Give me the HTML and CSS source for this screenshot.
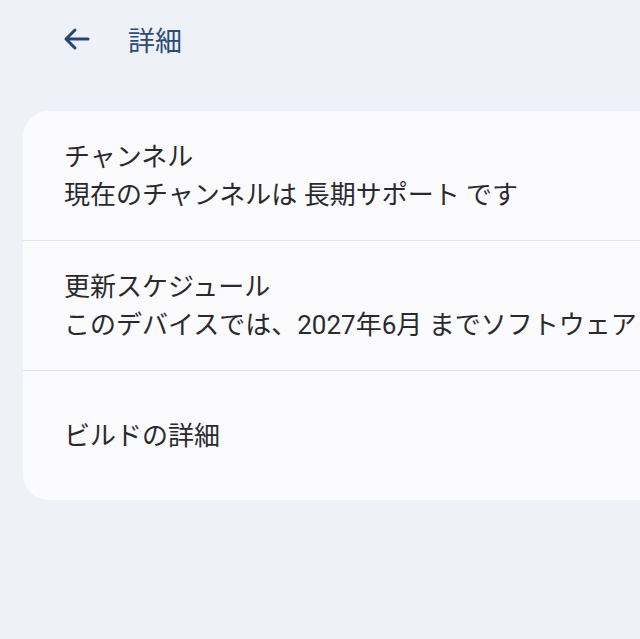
FILE: index.html
```html
<!DOCTYPE html>
<html lang="ja">
<head>
<meta charset="utf-8">
<link rel="stylesheet" href="styles.css">
</head>
<body>
<header class="topbar">
  <svg class="back" viewBox="0 0 28 28" width="28" height="28"><path d="M26 14H4M13 5l-9 9 9 9" fill="none" stroke="currentColor" stroke-width="3" stroke-linecap="round" stroke-linejoin="round"/></svg>
  <h1 class="title">詳細</h1>
</header>
<main class="card">
  <div class="row">
    <div class="row-title">チャンネル</div>
    <div class="row-sub">現在のチャンネルは 長期サポート です</div>
  </div>
  <div class="row">
    <div class="row-title">更新スケジュール</div>
    <div class="row-sub">このデバイスでは、2027年6月 までソフトウェア</div>
  </div>
  <div class="row">
    <div class="row-title">ビルドの詳細</div>
  </div>
</main>
</body>
</html>
```
FILE: styles.css
```css
html, body {
  margin: 0;
  padding: 0;
}
body {
  width: 640px;
  height: 639px;
  overflow: hidden;
  background: #eef1f8;
  font-family: Roboto, "Noto Sans CJK JP", sans-serif;
  color: #2a2a2e;
}
.topbar {
  height: 78px;
  display: flex;
  align-items: center;
  padding-left: 62px;
  gap: 38px;
  color: #244676;
}
.back {
  display: block;
}
.title {
  margin: 0;
  font-size: 27px;
  font-weight: 400;
  color: #2c4b77;
}
.card {
  margin-top: 33px;
  margin-left: 23px;
  width: 720px;
  background: #fbfbfe;
  border-radius: 26px;
  display: flex;
  flex-direction: column;
}
.row {
  height: 129px;
  display: flex;
  flex-direction: column;
  justify-content: center;
  padding-left: 41px;
  border-bottom: 1px solid #e4e4ea;
  white-space: nowrap;
}
.row:last-child {
  border-bottom: none;
}
.row-title, .row-sub {
  font-size: 26px;
  line-height: 38px;
}
```
